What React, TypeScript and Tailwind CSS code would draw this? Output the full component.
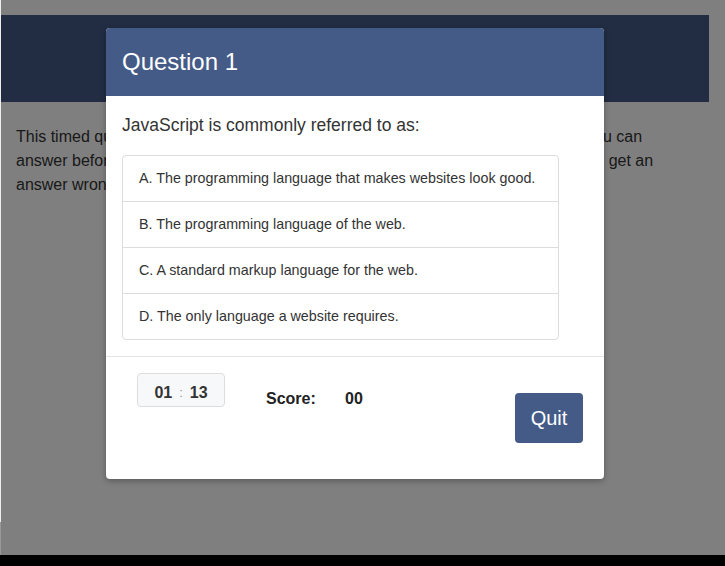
import React from "react";

const choices = [
  "A. The programming language that makes websites look good.",
  "B. The programming language of the web.",
  "C. A standard markup language for the web.",
  "D. The only language a website requires.",
];

// intro copy behind the modal, one entry per rendered line
const intro = [
  "This timed quiz will test your knowledge of JavaScript. See how many questions you can",
  "answer before the time runs out. Ten seconds are taken off the clock each time you get an",
  "answer wrong. Good luck!",
];

export default function App() {
  return (
    <div className="h-[566px] w-[725px] overflow-hidden bg-black font-['Liberation_Sans',Arial,sans-serif]">
      <div className="relative h-[555px] border-l border-[#eee] bg-white pt-[15px]">
        {/* page behind the dialog */}
        <div className="h-[87px] w-[708px] bg-[#445b87]" />
        <div className="mt-[23px] px-[15px] text-[16px] leading-6 text-[#333]">
          {intro.map((line) => (
            <div key={line} className="whitespace-nowrap">
              {line}
            </div>
          ))}
        </div>
        <div className="absolute bottom-0 left-[-1px] h-[33px] w-px bg-[#999]" />

        {/* backdrop */}
        <div className="absolute inset-0 bg-black/50" />

        {/* dialog */}
        <div className="absolute left-[105px] top-[28px] w-[498px] overflow-hidden rounded-[4px] bg-white shadow-[0_2px_6px_rgba(0,0,0,0.3)]">
          <div className="flex h-[68px] items-center bg-[#445b87] px-4">
            <h2 className="text-[24px] leading-none text-white">Question 1</h2>
          </div>

          <div className="px-4 pb-4 pt-[17px]">
            <p className="mb-[17px] text-[17.5px] leading-[25px] text-[#333]">
              JavaScript is commonly referred to as:
            </p>
            <ul className="w-[437px] rounded-[4px] border border-[#ddd]">
              {choices.map((c, i) => (
                <li
                  key={c}
                  className={`flex items-center px-4 text-[14.3px] text-[#333] ${
                    i > 0 ? "h-[46px] border-t border-[#ddd]" : "h-[45px]"
                  }`}
                >
                  {c}
                </li>
              ))}
            </ul>
          </div>

          <div className="flex items-start border-t border-[#e5e5e5] pb-9 pl-[31px] pr-[21px] pt-4">
            <div className="flex h-[34px] w-[88px] items-center justify-center gap-[7px] rounded-[4px] border border-[#ddd] bg-[#f7f8fa] pt-[5px] text-[16px] font-bold text-[#333]">
              <span>01</span>
              <span className="text-[13px] font-normal text-[#999]">:</span>
              <span>13</span>
            </div>
            <div className="ml-[41px] mt-[16px] flex text-[16px] font-bold leading-5 text-[#222]">
              <span className="w-[79px]">Score:</span>
              <span>00</span>
            </div>
            <button className="ml-auto mt-5 h-[50px] w-[68px] rounded-[4px] bg-[#445b87] text-[20px] text-white">
              Quit
            </button>
          </div>
        </div>
      </div>
    </div>
  );
}
